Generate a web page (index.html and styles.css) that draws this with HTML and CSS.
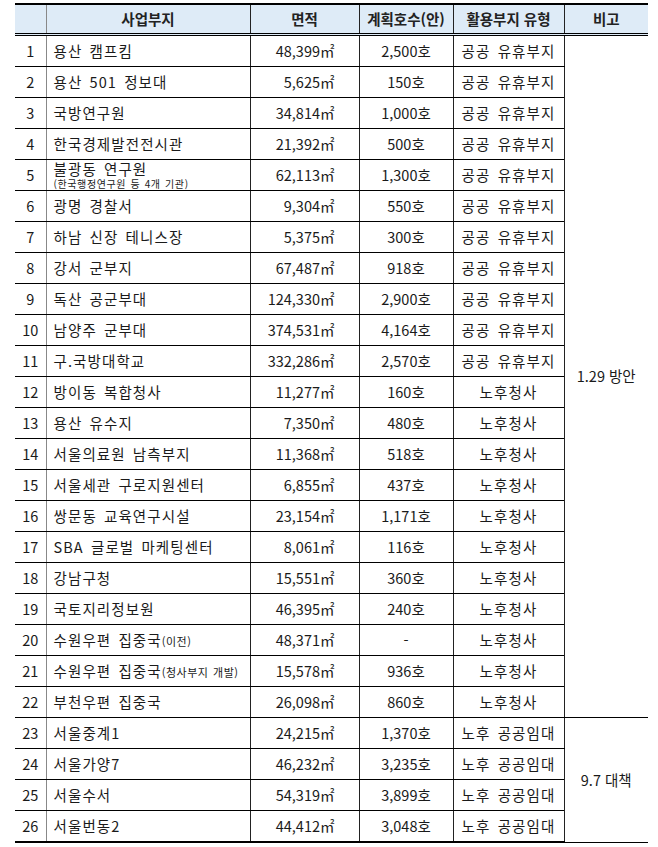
FILE: index.html
```html
<!DOCTYPE html>
<html lang="ko">
<head>
<meta charset="utf-8">
<link rel="stylesheet" href="styles.css">
</head>
<body>
<table class="sites">
<colgroup>
<col class="c-no"><col class="c-name"><col class="c-area"><col class="c-units"><col class="c-type"><col class="c-note">
</colgroup>
<thead>
<tr><th class="no"></th><th>사업부지</th><th>면적</th><th>계획호수(안)</th><th>활용부지 유형</th><th class="last">비고</th></tr>
</thead>
<tbody>
<tr><td class="no">1</td><td class="name">용산 캠프킴</td><td class="area">48,399㎡</td><td class="units">2,500호</td><td class="type">공공 유휴부지</td><td class="note" rowspan="22">1.29 방안</td></tr>
<tr><td class="no">2</td><td class="name">용산 501 정보대</td><td class="area">5,625㎡</td><td class="units">150호</td><td class="type">공공 유휴부지</td></tr>
<tr><td class="no">3</td><td class="name">국방연구원</td><td class="area">34,814㎡</td><td class="units">1,000호</td><td class="type">공공 유휴부지</td></tr>
<tr><td class="no">4</td><td class="name">한국경제발전전시관</td><td class="area">21,392㎡</td><td class="units">500호</td><td class="type">공공 유휴부지</td></tr>
<tr><td class="no">5</td><td class="name two"><span class="main">불광동 연구원</span><span class="sub">(한국행정연구원 등 4개 기관)</span></td><td class="area">62,113㎡</td><td class="units">1,300호</td><td class="type">공공 유휴부지</td></tr>
<tr><td class="no">6</td><td class="name">광명 경찰서</td><td class="area">9,304㎡</td><td class="units">550호</td><td class="type">공공 유휴부지</td></tr>
<tr><td class="no">7</td><td class="name">하남 신장 테니스장</td><td class="area">5,375㎡</td><td class="units">300호</td><td class="type">공공 유휴부지</td></tr>
<tr><td class="no">8</td><td class="name">강서 군부지</td><td class="area">67,487㎡</td><td class="units">918호</td><td class="type">공공 유휴부지</td></tr>
<tr><td class="no">9</td><td class="name">독산 공군부대</td><td class="area">124,330㎡</td><td class="units">2,900호</td><td class="type">공공 유휴부지</td></tr>
<tr><td class="no">10</td><td class="name">남양주 군부대</td><td class="area">374,531㎡</td><td class="units">4,164호</td><td class="type">공공 유휴부지</td></tr>
<tr><td class="no">11</td><td class="name">구.국방대학교</td><td class="area">332,286㎡</td><td class="units">2,570호</td><td class="type">공공 유휴부지</td></tr>
<tr><td class="no">12</td><td class="name">방이동 복합청사</td><td class="area">11,277㎡</td><td class="units">160호</td><td class="type">노후청사</td></tr>
<tr><td class="no">13</td><td class="name">용산 유수지</td><td class="area">7,350㎡</td><td class="units">480호</td><td class="type">노후청사</td></tr>
<tr><td class="no">14</td><td class="name">서울의료원 남측부지</td><td class="area">11,368㎡</td><td class="units">518호</td><td class="type">노후청사</td></tr>
<tr><td class="no">15</td><td class="name">서울세관 구로지원센터</td><td class="area">6,855㎡</td><td class="units">437호</td><td class="type">노후청사</td></tr>
<tr><td class="no">16</td><td class="name">쌍문동 교육연구시설</td><td class="area">23,154㎡</td><td class="units">1,171호</td><td class="type">노후청사</td></tr>
<tr><td class="no">17</td><td class="name">SBA 글로벌 마케팅센터</td><td class="area">8,061㎡</td><td class="units">116호</td><td class="type">노후청사</td></tr>
<tr><td class="no">18</td><td class="name">강남구청</td><td class="area">15,551㎡</td><td class="units">360호</td><td class="type">노후청사</td></tr>
<tr><td class="no">19</td><td class="name">국토지리정보원</td><td class="area">46,395㎡</td><td class="units">240호</td><td class="type">노후청사</td></tr>
<tr><td class="no">20</td><td class="name">수원우편 집중국<span class="small">(이전)</span></td><td class="area">48,371㎡</td><td class="units">-</td><td class="type">노후청사</td></tr>
<tr><td class="no">21</td><td class="name">수원우편 집중국<span class="small">(청사부지 개발)</span></td><td class="area">15,578㎡</td><td class="units">936호</td><td class="type">노후청사</td></tr>
<tr><td class="no">22</td><td class="name">부천우편 집중국</td><td class="area">26,098㎡</td><td class="units">860호</td><td class="type">노후청사</td></tr>
<tr><td class="no">23</td><td class="name">서울중계1</td><td class="area">24,215㎡</td><td class="units">1,370호</td><td class="type">노후 공공임대</td><td class="note" rowspan="4">9.7 대책</td></tr>
<tr><td class="no">24</td><td class="name">서울가양7</td><td class="area">46,232㎡</td><td class="units">3,235호</td><td class="type">노후 공공임대</td></tr>
<tr><td class="no">25</td><td class="name">서울수서</td><td class="area">54,319㎡</td><td class="units">3,899호</td><td class="type">노후 공공임대</td></tr>
<tr><td class="no">26</td><td class="name">서울번동2</td><td class="area">44,412㎡</td><td class="units">3,048호</td><td class="type">노후 공공임대</td></tr>
</tbody>
</table>
</body>
</html>
```
FILE: styles.css
```css
html, body {
  margin: 0;
  padding: 0;
  background: #fff;
}
body {
  padding: 3px 0 0 15px;
  font-family: "Noto Sans CJK KR", "Noto Sans", sans-serif;
  color: #1a1a1a;
}
.sites {
  border-collapse: collapse;
  table-layout: fixed;
  width: 633px;
  font-size: 14.5px;
}
.c-no { width: 31px; }
.c-name { width: 204px; }
.c-area { width: 109px; }
.c-units { width: 94px; }
.c-type { width: 111px; }
.c-note { width: 84px; }

.sites th {
  background: #deebf7;
  font-weight: 700;
  font-size: 14.5px;
  height: 28px;
  padding: 0;
  text-align: center;
  border-top: 2px solid #000;
  border-bottom: 3px double #000;
  border-left: 1px solid #222;
  line-height: 1;
  white-space: nowrap;
  color: #222;
}
.sites th.no { border-left: none; border-right: 1px solid #888; }

.sites td {
  height: 30px;
  padding: 0;
  border-bottom: 1px solid #000;
  border-left: 1px solid #222;
  line-height: 1;
  white-space: nowrap;
  vertical-align: middle;
}
.sites td.no {
  border-left: none;
  border-right: 1px solid #888;
  text-align: center;
}
.sites td.name {
  text-align: left;
  padding-left: 7px;
  letter-spacing: 1.1px;
  word-spacing: 2px;
}
.sites td.area {
  text-align: right;
  padding-right: 24px;
}
.sites td.units { text-align: center; }
.sites td.type { text-align: center; letter-spacing: 1.1px; word-spacing: 2px; }
.sites td.note { text-align: center; }
.sites tbody tr:last-child td { border-bottom: 2px solid #000; }

.name.two .main { display: block; line-height: 16px; }
.name.two .sub { display: block; font-size: 10px; line-height: 13px; letter-spacing: 0.6px; word-spacing: 1px; }
.small { font-size: 11px; letter-spacing: 0.5px; word-spacing: 1px; }
```
